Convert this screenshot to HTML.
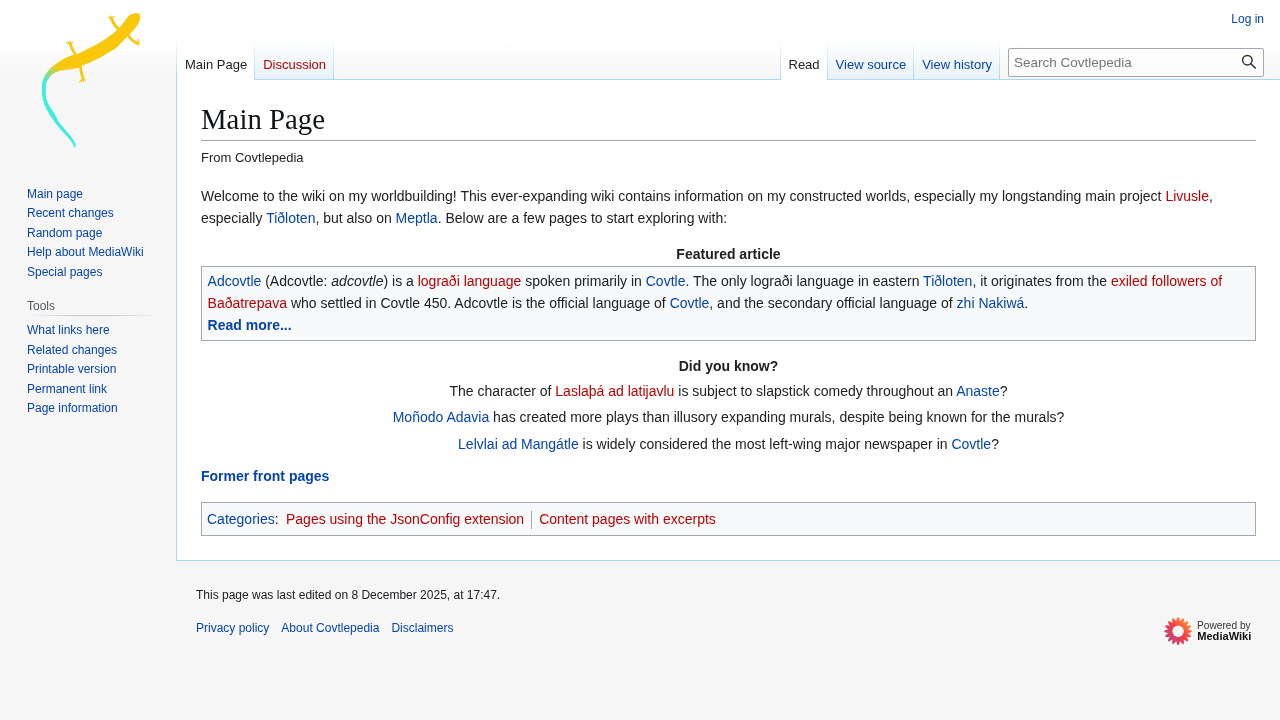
<!DOCTYPE html>
<html><head><meta charset="utf-8"><title>Covtlepedia</title>
<style>
html,body{margin:0;padding:0;}
#wrap{will-change:transform;position:absolute;left:0;top:0;width:1280px;height:720px;overflow:hidden;background:#f6f6f6;}
body{background:#f6f6f6;color:#202122;font-family:"Liberation Sans",sans-serif;font-size:16px;position:relative;width:1280px;height:720px;overflow:hidden;}
a{text-decoration:none;color:#0645ad;}
a.new{color:#ba0000;}
#page-base{height:80px;background:linear-gradient(#fff 50%,#f6f6f6 100%);}
#head-base{margin-top:-80px;margin-left:176px;height:80px;}
#content{margin-left:176px;border:1px solid #a7d7f9;border-right-width:0;margin-top:-1px;padding:20px 24px 24px 24px;background:#fff;color:#202122;position:relative;}
h1{font-family:"Liberation Serif",serif;font-size:28.8px;line-height:39px;font-weight:normal;margin:0 0 4px 0;padding:0 0 1px 0;border-bottom:1px solid #a2a9b1;color:#101418;overflow:visible;}
#body{font-size:14px;line-height:22px;}
#siteSub{font-size:13px;margin-top:6px;line-height:21px;}
p{margin:7px 0;}
#head{position:absolute;top:0;right:0;width:100%;}
#left-nav{position:absolute;left:176px;top:40px;}
#right-nav{position:absolute;right:0;top:40px;}
.tabs{float:left;height:40px;padding-left:1px;background-image:linear-gradient(to bottom,rgba(167,215,249,0) 0,#a7d7f9 100%);background-size:1px 100%;background-repeat:no-repeat;background-position:left bottom;}
.tabs ul{float:left;height:100%;list-style:none;margin:0;padding:0;}
.tabs li{float:left;height:100%;margin:0;padding:0;background-color:#eaf3ff;background-image:linear-gradient(to top,#77c1f6 0,#e8f2f8 1px,#fff 100%);white-space:nowrap;}
.tabs li.sel{background:#fff;}
.tabs li a{display:block;box-sizing:border-box;height:40px;padding:15.25px 8px 0 8px;font-size:13px;line-height:1.6;background-image:linear-gradient(to bottom,rgba(167,215,249,0) 0,#a7d7f9 100%);background-position:right bottom;background-repeat:no-repeat;background-size:1px 100%;}
.tabs li.sel a{color:#202122;}
#search{float:left;margin:0 16px 0 8px;}
#simpleSearch{margin-top:8.4px;position:relative;width:256px;}
#searchInput{box-sizing:border-box;width:256px;height:29px;border:1px solid #a2a9b1;border-radius:2px;background:rgba(255,255,255,.5);font-size:13.5px;color:#72777d;padding:0 0 0 5px;line-height:27px;font-family:"Liberation Sans",sans-serif;}
#sicon{position:absolute;left:230px;top:3.6px;}
#personal{position:absolute;top:6px;right:16px;font-size:12px;}
#personal a{display:block;padding-top:6px;line-height:14px;}
#panel{position:absolute;top:0;left:0;width:176px;}
#logo{position:absolute;left:0;top:0;width:176px;height:160px;}
.portal{position:absolute;left:27px;font-size:12px;}
.portal ul{list-style:none;margin:0;padding:0;}
.portal li{line-height:13px;padding:3px 0;margin:0;height:13px;}
#p-nav li:nth-child(2),#p-nav li:nth-child(4),#p-tb li:nth-child(1),#p-tb li:nth-child(3){padding-bottom:4px;}
.portal h3{font-size:12px;line-height:normal;color:#54595d;font-weight:normal;margin:0;padding:3px 0;width:131.2px;background-image:linear-gradient(to right,rgba(200,204,209,0) 0,#c8ccd1 33%,#c8ccd1 66%,rgba(200,204,209,0) 100%);background-position:center bottom;background-repeat:no-repeat;background-size:100% 1px;}
#p-tb ul{padding-top:4.8px;}
#footer{margin-left:176px;padding:20px;}
#footer ul{list-style:none;margin:0;padding:0;}
#footer li{color:#202122;font-size:12px;padding:6px 0;margin:0;}
#f-info li{line-height:1.4;}
#f-places li{float:left;margin-right:12px;line-height:24px;}
#f-icons{position:absolute;left:1156px;top:615px;}
#poweredby{display:block;}
.featured-h{text-align:center;font-weight:bold;}
#fa-h{margin-top:14px;margin-bottom:1px;}
#dyk-h{margin-top:14px;}
.dyk p{margin:0;}
.dyk p:nth-child(1){margin-top:3px;}
.dyk p:nth-child(2){margin-top:4px;}
.dyk p:nth-child(3){margin-top:5px;}
#former{margin:10px 0 0 0;}
.box{border:1px solid #a2a9b1;background:#f8f9fa;padding:3px 5px 4px 5.6px;}
.dyk p{text-align:center;}
#catlinks{border:1px solid #a2a9b1;background:#f8f9fa;padding:5px;margin-top:15px;height:22px;}
#catlinks ul{display:inline;margin:0;padding:0;list-style:none;}
#catlinks li{display:inline-block;line-height:1.25em;border-left:1px solid #a2a9b1;margin:2px 0;padding:0 7px;}
#catlinks li:first-child{border-left:0;padding-left:3.5px;}
</style></head>
<body>
<div id="wrap">
<div id="page-base"></div>
<div id="head-base"></div>
<div id="content">
<h1>Main Page</h1>
<div id="body">
<div id="siteSub">From Covtlepedia</div>
<p style="margin:17px 0 0 0">Welcome to the wiki on my worldbuilding! This ever-expanding wiki contains information on my constructed worlds, especially my longstanding main project <a class="new" href="#">Livusle</a>, especially <a href="#">Tiðloten</a>, but also on <a href="#">Meptla</a>. Below are a few pages to start exploring with:</p>
<div class="featured-h" id="fa-h">Featured article</div>
<div class="box">
<a href="#">Adcovtle</a> (Adcovtle: <i>adcovtle</i>) is a <a class="new" href="#">lograði language</a> spoken primarily in <a href="#">Covtle</a>. The only lograði language in eastern <a href="#">Tiðloten</a>, it originates from the <a class="new" href="#">exiled followers of Baðatrepava</a> who settled in Covtle 450. Adcovtle is the official language of <a href="#">Covtle</a>, and the secondary official language of <a href="#">zhi Nakiwá</a>.<br><b><a href="#">Read more...</a></b>
</div>
<div class="featured-h" id="dyk-h">Did you know?</div>
<div class="dyk">
<p>The character of <a class="new" href="#">Laslaþá ad latijavlu</a> is subject to slapstick comedy throughout an <a href="#">Anaste</a>?</p>
<p><a href="#">Moñodo Adavia</a> has created more plays than illusory expanding murals, despite being known for the murals?</p>
<p><a href="#">Lelvlai ad Mangátle</a> is widely considered the most left-wing major newspaper in <a href="#">Covtle</a>?</p>
</div>
<p id="former"><b><a href="#">Former front pages</a></b></p>
<div id="catlinks"><a href="#">Categories</a>: <ul><li><a class="new" href="#">Pages using the JsonConfig extension</a></li><li><a class="new" href="#">Content pages with excerpts</a></li></ul></div>
</div>
</div>
<div id="footer">
<div id="f-icons"><svg id="poweredby" width="104" height="32" viewBox="0 0 104 32">
<defs><linearGradient id="pg" gradientUnits="userSpaceOnUse" x1="36" y1="2" x2="8" y2="30"><stop offset="0" stop-color="#ffb52e"/><stop offset="0.48" stop-color="#f83c40"/><stop offset="1" stop-color="#9a4ca4"/></linearGradient></defs>
<rect x="0" y="8" width="104" height="14" fill="#f8f9fa" opacity="0.6"/>
<path d="M20.15,6.49 Q20.48,3.50 22.10,2.00 Q23.72,3.50 24.05,6.49 Q25.50,3.86 27.57,3.09 Q28.49,5.09 27.66,7.99 Q30.01,6.11 32.21,6.19 Q32.29,8.39 30.41,10.74 Q33.31,9.91 35.31,10.83 Q34.54,12.90 31.91,14.35 Q34.90,14.68 36.40,16.30 Q34.90,17.92 31.91,18.25 Q34.54,19.70 35.31,21.77 Q33.31,22.69 30.41,21.86 Q32.29,24.21 32.21,26.41 Q30.01,26.49 27.66,24.61 Q28.49,27.51 27.57,29.51 Q25.50,28.74 24.05,26.11 Q23.72,29.10 22.10,30.60 Q20.48,29.10 20.15,26.11 Q18.70,28.74 16.63,29.51 Q15.71,27.51 16.54,24.61 Q14.19,26.49 11.99,26.41 Q11.91,24.21 13.79,21.86 Q10.89,22.69 8.89,21.77 Q9.66,19.70 12.29,18.25 Q9.30,17.92 7.80,16.30 Q9.30,14.68 12.29,14.35 Q9.66,12.90 8.89,10.83 Q10.89,9.91 13.79,10.74 Q11.91,8.39 11.99,6.19 Q14.19,6.11 16.54,7.99 Q15.71,5.09 16.63,3.09 Q18.70,3.86 20.15,6.49 Z" fill="url(#pg)"/>
<circle cx="22.1" cy="16.3" r="5.7" fill="#f8f8f9"/>
<text x="41" y="13.8" font-family="Liberation Sans" font-size="10" fill="#333" textLength="53.6" lengthAdjust="spacingAndGlyphs">Powered by</text>
<text x="41.2" y="24.8" font-family="Liberation Sans" font-weight="bold" font-size="10.4" fill="#111" textLength="54.2" lengthAdjust="spacingAndGlyphs">MediaWiki</text>
</svg></div>
<ul id="f-info"><li>This page was last edited on 8 December 2025, at 17:47.</li></ul>
<ul id="f-places"><li><a href="#">Privacy policy</a></li><li><a href="#">About Covtlepedia</a></li><li><a href="#">Disclaimers</a></li></ul>
</div>

<div id="head">
<div id="personal"><a href="#">Log in</a></div>
<div id="left-nav"><div class="tabs"><ul><li class="sel"><a href="#">Main Page</a></li><li><a class="new" href="#">Discussion</a></li></ul></div></div>
<div id="right-nav"><div class="tabs"><ul><li class="sel"><a href="#">Read</a></li><li><a href="#">View source</a></li><li><a href="#">View history</a></li></ul></div>
<div id="search"><div id="simpleSearch"><div id="searchInput">Search Covtlepedia</div><svg id="sicon" width="20" height="20" viewBox="0 0 20 20"><circle cx="9.35" cy="8.15" r="4.75" fill="none" stroke="#333" stroke-width="1.5"/><path d="M12.9,11.7 L17.2,16" stroke="#333" stroke-width="1.6" stroke-linecap="round"/></svg></div></div></div>
</div>

<div id="panel">
<svg id="logo" width="176" height="160" viewBox="0 0 176 160">
<defs><linearGradient id="lg" gradientUnits="userSpaceOnUse" x1="57.4" y1="65.9" x2="43.6" y2="82.6"><stop offset="0" stop-color="#f9c80d"/><stop offset="1" stop-color="#3aeee2"/></linearGradient></defs>
<g stroke="#f9c80d" stroke-linecap="round" stroke-linejoin="round" fill="none">
<path d="M119,29.5 Q114,25.5 111.6,19" stroke-width="3"/>
<path d="M111.6,19 L108.6,17.6 M111.6,19 L109.6,16.2 M111.6,19 L111.9,15.8 M111.6,19 L114.2,16.4" stroke-width="1.1"/>
<path d="M128.5,36 Q132,41 137,43.4" stroke-width="2.8"/>
<path d="M137,43.4 L138.4,39.4 M137,43.4 L139.3,41.5 M137,43.4 L139.3,43.3 M137,43.4 L138.5,45.2" stroke-width="1.1"/>
<path d="M75.5,54.5 Q72,50 70.4,44.3" stroke-width="2.8"/>
<path d="M70.4,44.3 L66.5,42.6 M70.4,44.3 L68.4,41.8 M70.4,44.3 L70.6,41.2 M70.4,44.3 L72.7,41.8" stroke-width="1.1"/>
<path d="M80.3,66 Q81.2,73 83,78.4" stroke-width="2.8"/>
<path d="M83,78.4 L79.6,81.8 M83,78.4 L81.6,81.4 M83,78.4 L83.7,81.6 M83,78.4 L85.4,80.4" stroke-width="1.1"/>
</g>
<path d="M140.00,16.50 C139.87,15.55 139.85,14.35 139.20,13.80 C138.55,13.25 137.35,13.17 136.10,13.20 C134.85,13.23 133.00,13.48 131.70,14.00 C130.40,14.52 129.42,15.17 128.30,16.30 C127.18,17.43 126.38,19.03 125.00,20.80 C123.62,22.57 121.43,25.30 120.00,26.90 C118.57,28.50 117.93,29.00 116.40,30.40 C114.87,31.80 113.47,33.33 110.80,35.30 C108.13,37.27 103.87,40.12 100.40,42.20 C96.93,44.28 93.73,45.88 90.00,47.80 C86.27,49.72 81.12,52.42 78.00,53.70 C74.88,54.98 73.80,54.58 71.30,55.50 C68.80,56.42 65.50,57.83 63.00,59.20 C60.50,60.57 58.33,62.22 56.30,63.70 C54.27,65.18 52.37,66.62 50.80,68.10 C49.23,69.58 48.02,71.12 46.90,72.60 C45.78,74.08 44.85,75.43 44.10,77.00 C43.35,78.57 42.77,80.17 42.40,82.00 C42.03,83.83 41.92,85.67 41.90,88.00 C41.88,90.33 41.80,93.08 42.30,96.00 C42.80,98.92 43.75,102.48 44.90,105.50 C46.05,108.52 47.48,111.23 49.20,114.10 C50.92,116.97 53.48,120.40 55.20,122.70 C56.92,125.00 57.78,125.88 59.50,127.90 C61.22,129.92 63.63,132.65 65.50,134.80 C67.37,136.95 69.33,138.95 70.70,140.80 C72.07,142.65 73.00,144.75 73.70,145.90 C74.40,147.05 74.60,147.93 74.90,147.70 C75.20,147.47 75.77,145.80 75.50,144.50 C75.23,143.20 74.53,141.82 73.30,139.90 C72.07,137.98 69.82,135.15 68.10,133.00 C66.38,130.85 64.57,128.87 63.00,127.00 C61.43,125.13 60.00,123.80 58.70,121.80 C57.40,119.80 56.78,117.72 55.20,115.00 C53.62,112.28 50.70,108.38 49.20,105.50 C47.70,102.62 46.77,100.28 46.20,97.70 C45.63,95.12 45.78,92.43 45.80,90.00 C45.82,87.57 45.83,84.98 46.30,83.10 C46.77,81.22 47.67,80.08 48.60,78.70 C49.53,77.32 50.62,75.92 51.90,74.80 C53.18,73.68 54.45,72.75 56.30,72.00 C58.15,71.25 60.50,70.77 63.00,70.30 C65.50,69.83 68.80,69.57 71.30,69.20 C73.80,68.83 76.40,68.65 78.00,68.10 C79.60,67.55 78.90,66.85 80.90,65.90 C82.90,64.95 86.75,63.80 90.00,62.40 C93.25,61.00 96.93,59.36 100.40,57.50 C103.87,55.64 107.90,53.10 110.80,51.25 C113.70,49.40 115.72,48.14 117.80,46.40 C119.88,44.66 121.45,42.67 123.30,40.80 C125.15,38.93 126.95,37.23 128.90,35.20 C130.85,33.17 133.43,30.53 135.00,28.60 C136.57,26.67 137.47,25.12 138.30,23.60 C139.13,22.08 139.72,20.68 140.00,19.50 C140.28,18.32 140.13,17.45 140.00,16.50Z" fill="url(#lg)"/>
</svg>
<div class="portal" id="p-nav" style="top:185px"><ul><li><a href="#">Main page</a></li><li><a href="#">Recent changes</a></li><li><a href="#">Random page</a></li><li><a href="#">Help about MediaWiki</a></li><li><a href="#">Special pages</a></li></ul></div>
<div class="portal" id="p-tb" style="top:295.9px"><h3>Tools</h3><ul><li><a href="#">What links here</a></li><li><a href="#">Related changes</a></li><li><a href="#">Printable version</a></li><li><a href="#">Permanent link</a></li><li><a href="#">Page information</a></li></ul></div>
</div>
</div>
</body></html>
